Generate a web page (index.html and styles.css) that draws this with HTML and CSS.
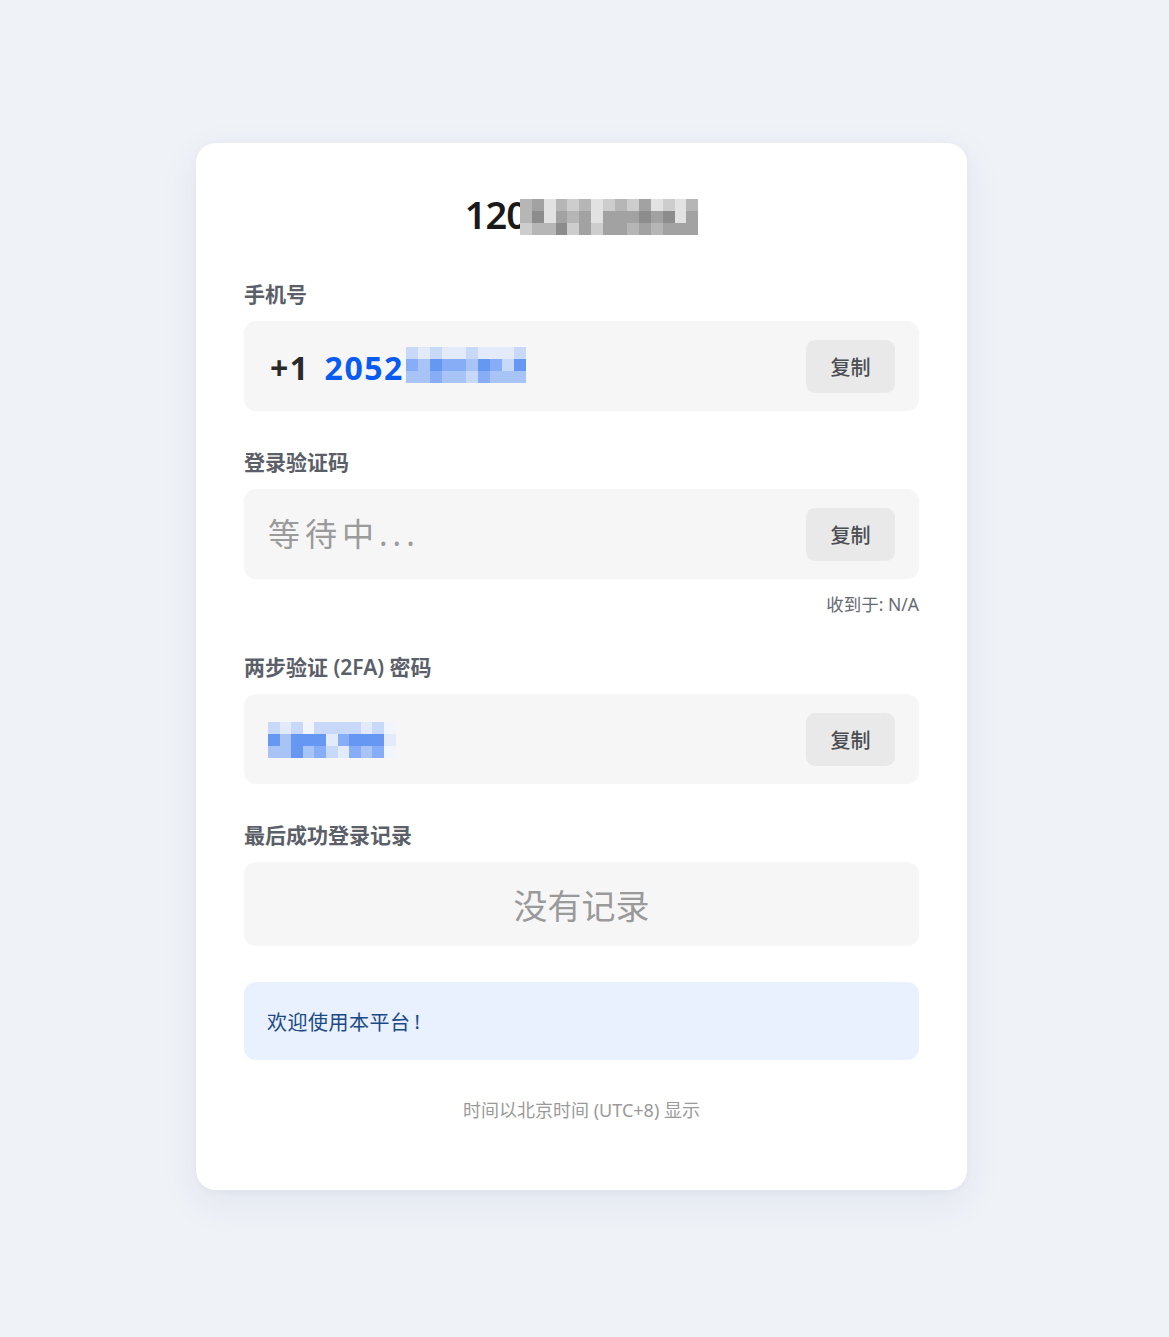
FILE: index.html
```html
<!DOCTYPE html>
<html lang="zh-CN">
<head>
<meta charset="utf-8">
<title>120</title>
<link rel="stylesheet" href="styles.css">
</head>
<body>
<main class="card">
  <h1 class="title"><span>120</span><span class="mosaic cols-15 grey" aria-hidden="true">
    <i class="c"></i><i class="d"></i><i class="a"></i><i class="c"></i><i class="b"></i><i class="c"></i><i class="a"></i><i class="b"></i><i class="c"></i><i class="b"></i><i class="d"></i><i class="a"></i><i class="b"></i><i class="a"></i><i class="c"></i>
    <i class="c"></i><i class="e"></i><i class="a"></i><i class="d"></i><i class="c"></i><i class="d"></i><i class="a"></i><i class="d"></i><i class="d"></i><i class="d"></i><i class="e"></i><i class="d"></i><i class="e"></i><i class="a"></i><i class="d"></i>
    <i class="b"></i><i class="c"></i><i class="c"></i><i class="e"></i><i class="b"></i><i class="d"></i><i class="b"></i><i class="d"></i><i class="d"></i><i class="c"></i><i class="d"></i><i class="c"></i><i class="d"></i><i class="d"></i><i class="d"></i>
  </span></h1>

  <section class="field">
    <div class="label">手机号</div>
    <div class="box">
      <div class="phone"><span class="cc">+1</span><span class="num">2052</span><span class="mosaic cols-10 blue" aria-hidden="true">
        <i class="b"></i><i class="a"></i><i class="b"></i><i class="a"></i><i class="a"></i><i class="b"></i><i class="a"></i><i class="a"></i><i class="a"></i><i class="b"></i>
        <i class="d"></i><i class="c"></i><i class="e"></i><i class="d"></i><i class="d"></i><i class="c"></i><i class="e"></i><i class="d"></i><i class="b"></i><i class="e"></i>
        <i class="c"></i><i class="c"></i><i class="d"></i><i class="c"></i><i class="c"></i><i class="b"></i><i class="d"></i><i class="c"></i><i class="c"></i><i class="c"></i>
      </span></div>
      <button class="copy">复制</button>
    </div>
  </section>

  <section class="field">
    <div class="label">登录验证码</div>
    <div class="box">
      <div class="waiting">等待中...</div>
      <button class="copy">复制</button>
    </div>
    <div class="meta">收到于: N/A</div>
  </section>

  <section class="field">
    <div class="label">两步验证 (2FA) 密码</div>
    <div class="box">
      <div class="secret"><span class="mosaic cols-11 blue" aria-hidden="true">
        <i class="b"></i><i class="a"></i><i class="b"></i><i class="w"></i><i class="b"></i><i class="b"></i><i class="b"></i><i class="b"></i><i class="a"></i><i class="b"></i><i class="w"></i>
        <i class="e"></i><i class="c"></i><i class="e"></i><i class="e"></i><i class="e"></i><i class="a"></i><i class="d"></i><i class="e"></i><i class="e"></i><i class="e"></i><i class="a"></i>
        <i class="c"></i><i class="c"></i><i class="e"></i><i class="c"></i><i class="d"></i><i class="b"></i><i class="a"></i><i class="d"></i><i class="c"></i><i class="d"></i><i class="w"></i>
      </span></div>
      <button class="copy">复制</button>
    </div>
  </section>

  <section class="field">
    <div class="label">最后成功登录记录</div>
    <div class="box empty">没有记录</div>
  </section>

  <div class="notice">欢迎使用本平台<span class="bang">!</span></div>

  <p class="footer">时间以北京时间 (UTC+8) 显示</p>
</main>
</body>
</html>
```

FILE: styles.css
```css
* { box-sizing: border-box; }

html, body { margin: 0; padding: 0; }

body {
  background: #eff2f7;
  font-family: "Noto Sans", "Noto Sans CJK SC", sans-serif;
  color: #333;
  padding: 143px 0 0 196px;
  min-height: 100vh;
}

.card {
  width: 771px;
  background: #fff;
  border-radius: 20px;
  padding: 48px 48px 49px;
  box-shadow: 0 12px 40px rgba(40, 60, 110, 0.07), 0 2px 10px rgba(40, 60, 110, 0.03);
}

.title {
  margin: 0 0 42px;
  height: 46px;
  display: flex;
  justify-content: center;
  align-items: center;
  font-size: 38px;
  line-height: 46px;
  font-weight: 600;
  color: #1a1a1a;
  letter-spacing: -1px;
}

.title .mosaic {
  margin-left: -7px;
  margin-top: 6px;
}

.mosaic {
  display: inline-grid;
  grid-auto-rows: 12px;
  letter-spacing: 0;
}
.mosaic i { display: block; }
.cols-15 { grid-template-columns: repeat(15, 11.9px); }
.cols-10 { grid-template-columns: repeat(10, 12px); }
.cols-11 { grid-template-columns: repeat(11, 11.6px); grid-auto-rows: 11.7px; }

.grey .a { background: #e2e2e2; }
.grey .b { background: #cdcdcd; }
.grey .c { background: #b6b6b6; }
.grey .d { background: #a2a2a2; }
.grey .e { background: #8c8c8c; }

.blue .w { background: #f2f5fc; }
.blue .a { background: #e3ebfb; }
.blue .b { background: #c8d8f8; }
.blue .c { background: #a8c3f6; }
.blue .d { background: #86adf5; }
.blue .e { background: #6597f3; }

.field { margin-bottom: 36px; }

.label {
  font-size: 21px;
  line-height: 30px;
  font-weight: 600;
  color: #5b6068;
  margin-bottom: 12px;
}

.box {
  background: #f6f6f6;
  border-radius: 12px;
  height: 90px;
  padding: 0 24px 0 24px;
  display: flex;
  align-items: center;
  justify-content: space-between;
}

.phone {
  font-size: 32px;
  font-weight: 700;
  letter-spacing: 1.5px;
  line-height: 40px;
  display: flex;
  align-items: center;
  padding-left: 2px;
  padding-top: 3px;
}
.phone .cc { color: #2a2a2a; margin-right: 15px; }
.phone .num { color: #0a5bf0; }
.phone .mosaic { margin-left: 2px; margin-top: -5px; }

.copy {
  font-family: inherit;
  border: 0;
  background: #e9e9e9;
  border-radius: 9px;
  width: 89px;
  height: 53px;
  font-size: 20px;
  font-weight: 500;
  color: #4a4d52;
  padding: 0;
  cursor: pointer;
}

.waiting {
  font-size: 32px;
  letter-spacing: 5px;
  color: #9b9b9b;
  line-height: 40px;
}

.secret { display: flex; align-items: center; padding-top: 2px; }

.meta {
  margin-top: 13px;
  text-align: right;
  font-size: 17.5px;
  line-height: 24px;
  color: #666b72;
}

.box.empty {
  height: 84px;
  justify-content: center;
  font-size: 34px;
  color: #9a9a9a;
}

.notice {
  background: #e8f1fd;
  border-radius: 12px;
  height: 78px;
  display: flex;
  align-items: center;
  padding: 0 23px;
  font-size: 20px;
  letter-spacing: 0.5px;
  color: #1b4a86;
}
.notice .bang { margin-left: 4px; }

.footer {
  margin: 38px 0 19px;
  text-align: center;
  font-size: 18px;
  line-height: 24px;
  color: #9a9a9a;
}
```
